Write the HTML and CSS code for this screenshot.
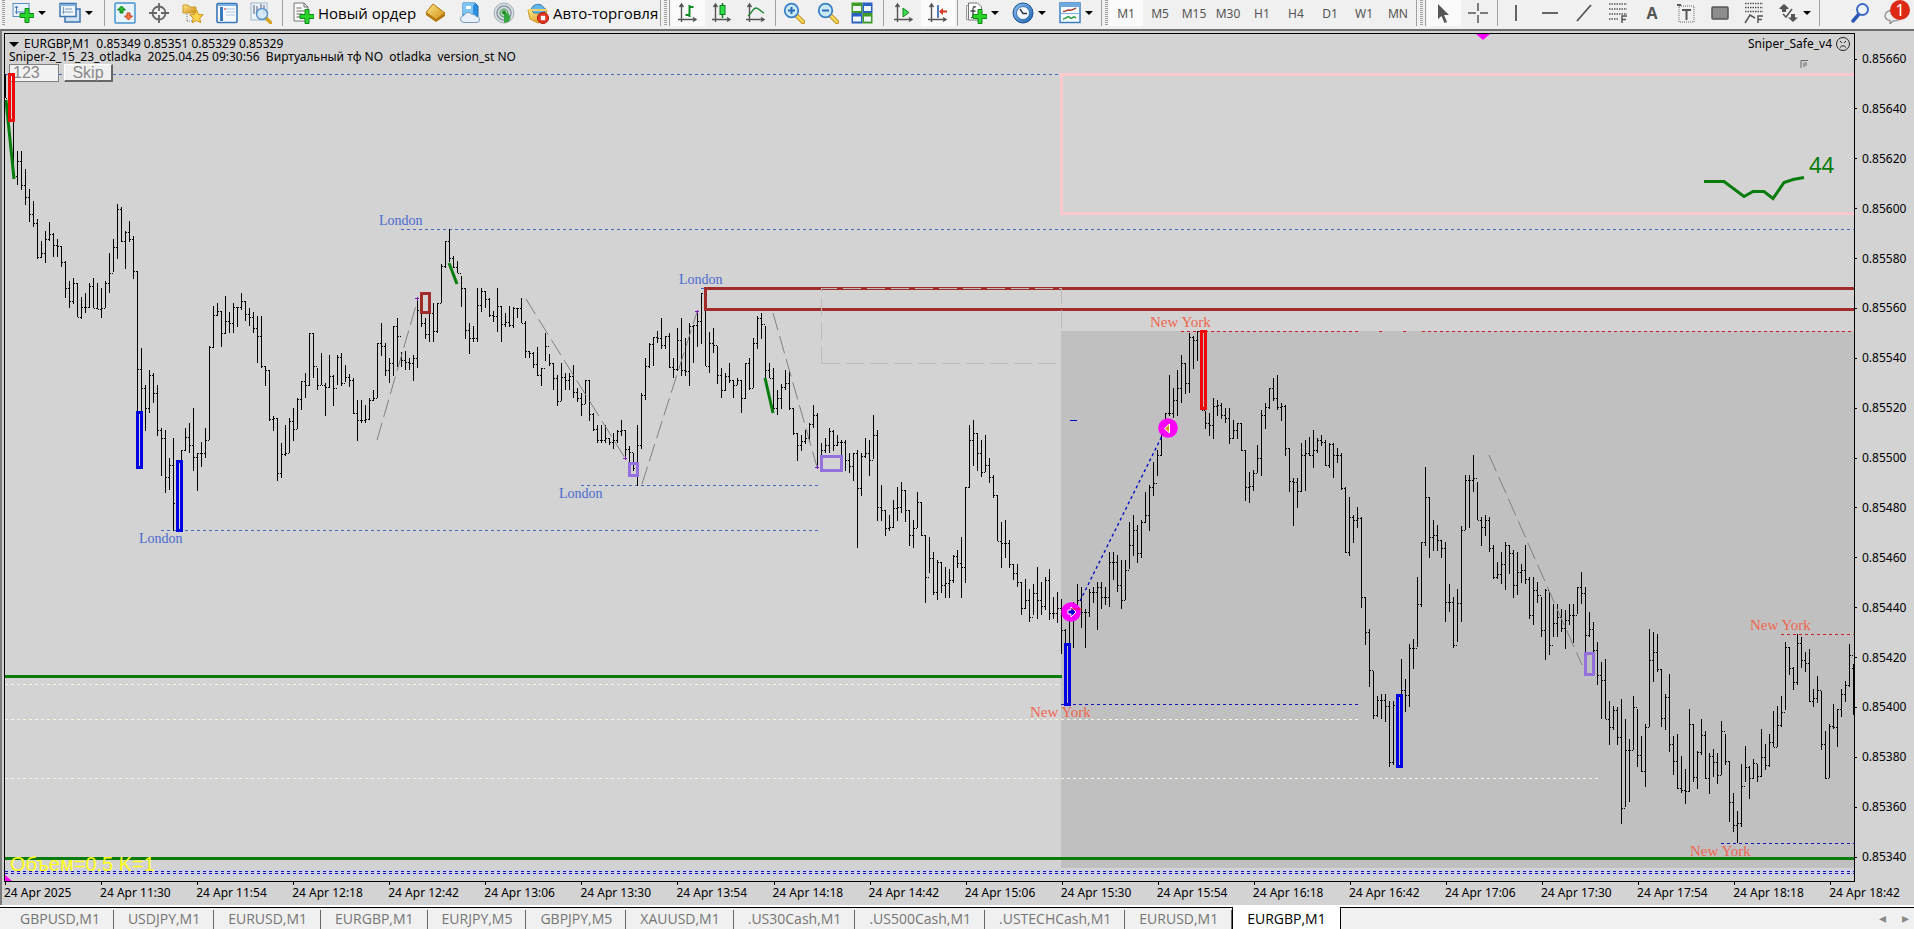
FILE: index.html
```html
<!DOCTYPE html>
<html lang="ru">
<head>
<meta charset="utf-8">
<title>EURGBP,M1</title>
<link rel="stylesheet" href="styles.css">
</head>
<body>
<svg class="defs" aria-hidden="true">
  <defs>
    <linearGradient id="g-blue" x1="0" y1="0" x2="1" y2="1"><stop offset="0" stop-color="#8fc4f3"/><stop offset="1" stop-color="#1d5fae"/></linearGradient>
    <linearGradient id="g-gold" x1="0" y1="0" x2="1" y2="1"><stop offset="0" stop-color="#ffe88a"/><stop offset="1" stop-color="#cf8c10"/></linearGradient>
    <path id="plus" d="M5 0h4v5h5v4H9v5H5V9H0V5h5z" fill="#2bd42b" stroke="#0a8a12"/>
    <g id="axes" fill="none" stroke="#555" stroke-width="1.4"><path d="M4.500 2v18M1 17.500h18M2.500 5l2-3 2 3M16 15.500l3 2-3 2"/></g>
    <g id="lens"><path d="M13 13l7 7" stroke="#b98512" stroke-width="4.500" stroke-linecap="round"/><path d="M14 14l6 6" stroke="#ffd95a" stroke-width="2.500" stroke-linecap="round"/><circle cx="8.500" cy="8.500" r="6.800" fill="#c9e9fb" stroke="#3b7fc4" stroke-width="1.800"/></g>
  </defs>
</svg>

<header class="toolbar">
  <i class="grip"></i>
  <button class="tool drop" aria-label="Новый график"><svg class="icon" viewBox="0 0 22 22"><rect x="1" y="1.500" width="16" height="13" fill="#eaf3fc" stroke="#5b8fc7"/><path d="M4.500 4v8M3 6l1.500-2L6 6M3 10h11" fill="none" stroke="#4a7db5"/><use href="#plus" x="8" y="6.500"/></svg></button>
  <button class="tool drop" aria-label="Профили"><svg class="icon" viewBox="0 0 22 22"><rect x="6" y="7" width="15" height="13" fill="#cfe2f5" stroke="#3f73ae" stroke-width="1.500"/><rect x="1" y="1.500" width="16" height="13" fill="#eef6fd" stroke="#3f73ae" stroke-width="1.500"/><path d="M1 3h16" stroke="#7fb0e2" stroke-width="2"/><path d="M4.500 5v7M3 10h11M6 7h7" fill="none" stroke="#7b98b8"/></svg></button>
  <i class="sep"></i>
  <button class="tool" aria-label="Обзор рынка"><svg class="icon" viewBox="0 0 22 22"><rect x="1" y="1" width="20" height="20" rx="1" fill="#e6f3fd" stroke="#4a94d0" stroke-width="1.500"/><path d="M7.500 4l4 4H9v3H6V8H3.500z" fill="#2cb52c" stroke="#0f7f18"/><path d="M14.500 18l4-4H16v-3h-3v3h-2.500z" fill="#f47a45" stroke="#c8401c"/></svg></button>
  <button class="tool" aria-label="Окно данных"><svg class="icon" viewBox="0 0 22 22"><circle cx="11" cy="11" r="6.500" fill="none" stroke="#666" stroke-width="1.800"/><path d="M11 1v8M11 13v8M1 11h8M13 11h8" stroke="#666" stroke-width="1.800"/></svg></button>
  <button class="tool" aria-label="Навигатор"><svg class="icon" viewBox="0 0 22 22"><path d="M1 3h5l1.500 2H14v6H1z" fill="url(#g-gold)" stroke="#c8992c"/><path d="M5 12v8M5 19h5" stroke="#777" stroke-dasharray="1 1"/><path d="M14.500 8l2 4.300 4.700.6-3.500 3.200 1 4.600-4.200-2.300-4.200 2.300 1-4.600-3.500-3.200 4.700-.6z" fill="#ffd34d" stroke="#c8921a"/></svg></button>
  <button class="tool" aria-label="Терминал"><svg class="icon" viewBox="0 0 22 22"><rect x="1" y="1.500" width="20" height="19" rx="1" fill="#f6faff" stroke="#3877b8" stroke-width="1.600"/><path d="M2 3h18" stroke="#7bb2e6" stroke-width="2"/><path d="M5.500 5v14" stroke="#3877b8" stroke-width="3"/><path d="M10 7h9M10 10h9M10 13h9" stroke="#a9c5e2"/><path d="M8 7h2" stroke="#c22"/></svg></button>
  <button class="tool" aria-label="Тестер стратегий"><svg class="icon" viewBox="0 0 22 22"><rect x="1" y="1" width="16" height="17" fill="#eef4fa" stroke="#9ab4cc"/><path d="M4 3v9M7 4v7M11 2v6M14 3v9" stroke="#557"/><path d="M16 16l5 5" stroke="#d8a423" stroke-width="3.500" stroke-linecap="round"/><circle cx="12" cy="12" r="5.500" fill="#cfe9fa" fill-opacity=".8" stroke="#5b93cc" stroke-width="1.500"/></svg></button>
  <i class="sep"></i>
  <button class="tool wide"><svg class="icon" viewBox="0 0 22 22"><path d="M2 1h10l4 4v14H2z" fill="#fafafa" stroke="#777"/><path d="M12 1v4h4M4.500 6h5M4.500 9h8M4.500 12h6M4.500 15h4" fill="none" stroke="#666"/><use href="#plus" x="8" y="7.500"/></svg>Новый ордер</button>
  <button class="tool" aria-label="MetaEditor"><svg class="icon" viewBox="0 0 22 22"><path d="M8 2l12 9v3l-9 6-10-7v-3z" fill="#b3780f"/><path d="M8 2l12 9-9 6.500L1 10.500z" fill="url(#g-gold)" stroke="#b3780f"/></svg></button>
  <button class="tool" aria-label="VPS"><svg class="icon" viewBox="0 0 22 22"><path d="M4 1h12l3 3v11H4z" fill="#2a8fe0" stroke="#1c6cb5"/><path d="M4 1h12l-2 3v8H4z" fill="#7cc5f7"/><path d="M7 4h5v3H7z" fill="#fff"/><path d="M5 20.500a3.500 3.500 0 010-7 4.500 4.500 0 018-1 3.500 3.500 0 014 2 3 3 0 011 6z" fill="#e8f1fa" stroke="#7b9cc0"/></svg></button>
  <button class="tool" aria-label="Сигналы"><svg class="icon" viewBox="0 0 22 22"><circle cx="11" cy="11" r="10" fill="#d5dde2" stroke="#a3adb5"/><circle cx="11" cy="11" r="7" fill="none" stroke="#8a97a1" stroke-width="1.500"/><circle cx="11" cy="11" r="3.800" fill="#b8e2b8" stroke="#6aa57a" stroke-width="1.500"/><path d="M11 11a5 5 0 014 9l-4 1z" fill="#35a83d"/><circle cx="11" cy="10.500" r="2" fill="#24842c"/></svg></button>
  <button class="tool wide auto"><svg class="icon" viewBox="0 0 22 22"><path d="M1 8h19l-2 9-7 4-8-4z" fill="url(#g-gold)" stroke="#c89422"/><path d="M4 8a7 7 0 0113-2l3 2-5 3H7z" fill="#63b7e6" stroke="#3283b8"/><path d="M1 8h19" stroke="#f2cf67" stroke-width="2"/><circle cx="16" cy="16" r="5.500" fill="#e03522" stroke="#b01c0d"/><rect x="13.800" y="13.800" width="4.400" height="4.400" fill="#fff"/></svg>Авто-торговля</button>
  <i class="line"></i><i class="grip"></i><i class="line"></i>
  <button class="tool on" aria-label="Бары"><svg class="icon" viewBox="0 0 22 22"><use href="#axes"/><path d="M12.500 3v12M12.500 5h4M8.500 13h4" stroke="#118a22" stroke-width="2"/></svg></button>
  <button class="tool" aria-label="Свечи"><svg class="icon" viewBox="0 0 22 22"><use href="#axes"/><path d="M11.500 1v15" stroke="#087a18" stroke-width="1.500"/><rect x="9" y="3.500" width="5" height="9" fill="#2ee04a" stroke="#087a18"/></svg></button>
  <button class="tool" aria-label="Линия"><svg class="icon" viewBox="0 0 22 22"><use href="#axes"/><path d="M3 14C6 12 8 6 11 6s5 4 8 5" fill="none" stroke="#1f8a35" stroke-width="1.500"/></svg></button>
  <i class="sep slim"></i>
  <button class="tool" aria-label="Приблизить"><svg class="icon" viewBox="0 0 22 22"><use href="#lens"/><path d="M5 8.500h7M8.500 5v7" stroke="#2b6cb0" stroke-width="2"/></svg></button>
  <button class="tool" aria-label="Отдалить"><svg class="icon" viewBox="0 0 22 22"><use href="#lens"/><path d="M5 8.500h7" stroke="#2b6cb0" stroke-width="2"/></svg></button>
  <button class="tool" aria-label="Окна мозаикой"><svg class="icon" viewBox="0 0 22 22"><rect width="11" height="10.500" x=".5" y=".5" fill="#3f9a28"/><rect x="11.500" y=".5" width="10" height="10.500" fill="#2a62c4"/><rect x=".5" y="11" width="11" height="10.500" fill="#2a62c4"/><rect x="11.500" y="11" width="10" height="10.500" fill="#3f9a28"/><path d="M2 4h8v5H2zM13 4h7v5h-7zM2 14.500h8v5H2zM13 14.500h7v5h-7z" fill="#eef5fb"/></svg></button>
  <i class="sep"></i>
  <button class="tool" aria-label="Автопрокрутка"><svg class="icon" viewBox="0 0 22 22"><use href="#axes"/><path d="M10 6l6 4.500-6 4.500z" fill="#3ddb4e" stroke="#118a22"/></svg></button>
  <button class="tool on" aria-label="Сдвиг графика"><svg class="icon" viewBox="0 0 22 22"><use href="#axes"/><path d="M11 3v13" stroke="#2a5fae" stroke-width="1.600"/><path d="M12 9.500l4-3.500v2.500h4v2h-4V13z" fill="#d8381e"/></svg></button>
  <i class="sep slim"></i>
  <button class="tool drop" aria-label="Индикаторы"><svg class="icon" viewBox="0 0 22 22"><path d="M1.500 3.500h12v14h-12z" fill="#eee" stroke="#999"/><path d="M3.500 1h9l4 4v13h-13z" fill="#fcfcfc" stroke="#777"/><path d="M11 5c-3-1-3 1-3 3v6c0 1-1 2-2 1.500M5.500 9h5" fill="none" stroke="#444" stroke-width="1.300"/><use href="#plus" x="8" y="7.500"/></svg></button>
  <button class="tool drop" aria-label="Периоды"><svg class="icon" viewBox="0 0 22 22"><circle cx="11" cy="11" r="10" fill="url(#g-blue)" stroke="#164f95"/><circle cx="11" cy="11" r="6.500" fill="#f4f9fe" stroke="#3974b5"/><path d="M8 7l3 4.500h4" fill="none" stroke="#334" stroke-width="1.400"/></svg></button>
  <button class="tool drop" aria-label="Шаблоны"><svg class="icon" viewBox="0 0 22 22"><rect x="1" y="1" width="20" height="19.500" fill="#f5faff" stroke="#3c7fc0" stroke-width="1.500"/><path d="M1 3h20" stroke="#6ea9df" stroke-width="4"/><path d="M2 11.500h18" stroke="#7fb0dd"/><path d="M4 9.500c3 0 4-2 6-1.500s4 0 7-2" fill="none" stroke="#a83a1e" stroke-width="1.500"/><path d="M4 17c3 0 4-3 6-2s2 2 3 1 2-2 4 0" fill="none" stroke="#2b9a3a" stroke-width="1.500"/></svg></button>
  <i class="line"></i><i class="grip"></i>
  <button class="tool tf on">M1</button>
  <button class="tool tf">M5</button>
  <button class="tool tf">M15</button>
  <button class="tool tf">M30</button>
  <button class="tool tf">H1</button>
  <button class="tool tf">H4</button>
  <button class="tool tf">D1</button>
  <button class="tool tf">W1</button>
  <button class="tool tf">MN</button>
  <i class="line"></i><i class="grip"></i><i class="line"></i>
  <button class="tool on" aria-label="Курсор"><svg class="icon" viewBox="0 0 22 22"><path d="M5 2v15l3.500-3 3 7 2.500-1-3-7h5z" fill="#555"/></svg></button>
  <button class="tool" aria-label="Перекрестие"><svg class="icon" viewBox="0 0 22 22"><path d="M11 1v8M11 13v8M1 11h8M13 11h8" stroke="#555" stroke-width="1.500"/></svg></button>
  <i class="sep slim"></i>
  <button class="tool" aria-label="Вертикальная линия"><svg class="icon" viewBox="0 0 22 22"><path d="M11 3v16" stroke="#555" stroke-width="1.800"/></svg></button>
  <button class="tool" aria-label="Горизонтальная линия"><svg class="icon" viewBox="0 0 22 22"><path d="M3 11h16" stroke="#555" stroke-width="1.800"/></svg></button>
  <button class="tool" aria-label="Трендовая линия"><svg class="icon" viewBox="0 0 22 22"><path d="M4 19L18 3" stroke="#555" stroke-width="1.800"/></svg></button>
  <button class="tool" aria-label="Фибоначчи"><svg class="icon" viewBox="0 0 22 22"><path d="M2 2h18M2 7h18M2 12h18M2 17h10" stroke="#555" stroke-width="1.500" stroke-dasharray="1.500 1"/><path d="M15 21v-7h5M15 17.500h4" fill="none" stroke="#555" stroke-width="1.500"/></svg></button>
  <button class="tool letter" aria-label="Текст">A</button>
  <button class="tool" aria-label="Метка"><svg class="icon" viewBox="0 0 22 22"><rect x="4" y="4" width="15" height="16" fill="none" stroke="#666" stroke-dasharray="1 1"/><path d="M7 8h9M11.500 8v10M2 3h4" stroke="#555" stroke-width="2"/></svg></button>
  <button class="tool" aria-label="Прямоугольник"><svg class="icon" viewBox="0 0 22 22"><rect x="3" y="5" width="16" height="12" rx="1" fill="#8c8c8c" stroke="#555" stroke-width="1.500"/></svg></button>
  <button class="tool" aria-label="Веер Фибоначчи"><svg class="icon" viewBox="0 0 22 22"><path d="M2 1.500h18M2 5.500h18M2 9.500h18" stroke="#555" stroke-width="1.500" stroke-dasharray="1.500 1"/><path d="M2 21l5-8 5 3M15 21v-7h5M15 17.500h4" fill="none" stroke="#555" stroke-width="1.500"/></svg></button>
  <button class="tool drop" aria-label="Стрелки"><svg class="icon" viewBox="0 0 22 22"><path d="M7 2l5 4.500-3 1V10H5V7.500l-3-1zM16 20l-5-4.500h3V12h4v3.500h3z" fill="#555"/><path d="M6 12l3 3 6-8" fill="none" stroke="#555" stroke-width="1.500"/></svg></button>
  <i class="line"></i>
  <div class="tray">
    <button class="tool" aria-label="Поиск"><svg class="icon" viewBox="0 0 22 22"><path d="M9 12l-6 7" stroke="#2a55b4" stroke-width="3.500" stroke-linecap="round"/><circle cx="12.500" cy="7.500" r="5.500" fill="#eef4fc" stroke="#3c68c4" stroke-width="2"/></svg></button>
    <button class="tool chat" aria-label="Сообщения"><svg class="icon" viewBox="0 0 22 22"><path d="M9 8c5 0 8 2 8 5.500S14 19 9 19l-3 3v-3.500C3 18 1 16 1 13.500S4 8 9 8z" fill="#eee" stroke="#999" stroke-width="1.500"/></svg><span class="badge">1</span></button>
  </div>
</header>

<main class="chart">
  <section class="plot">
    <svg class="canvas" viewBox="5 34 1849 847" preserveAspectRatio="none">
      <rect x="1061" y="331" width="800" height="537" fill="#c0c0c0"/>
      <rect x="5" y="869" width="1850" height="7" fill="#cdd0e4"/>
      <g class="dots">
        <path class="royal" d="M5 74.500H1061M401 229.500H1854M161 530.500H818M581 485.500H818M701 288.500h5"/>
        <path class="cream" d="M5 684.500H1060M5 719.500H1358M5 778.500H1598"/>
        <path class="navy" d="M1061 704.500H1358M1721 843.500H1854M5 871.500H1854M5 873.500H1854"/>
        <path class="crimson" d="M1181 331.500H1358M1379 331.500h3M1403 331.500h3M1422 331.500H1854M1781 634.500H1854"/>
      </g>
      <path id="bars" class="bars"/>
      <g class="trend"><path d="M377 440L417 302M526 299L625 458M642 484L697 312M773 313L817 467M1489 455L1582 665"/></g>
      <path class="marks" d="M415 298.500h4M417.500 297v4M623 458.500h4M625.500 456v4M695 311.500h4M697.500 310v4M815 467.500h4M817.500 465v4"/>
      <g class="thick">
        <rect class="pink" x="1061.500" y="74.500" width="800" height="139"/>
        <path class="green" d="M5 676.500H1062M5 858.500H1854"/>
        <rect class="brown" x="705.500" y="288.500" width="1160" height="21"/>
        <rect class="brown" x="421.500" y="293.500" width="8" height="19"/>
        <rect class="red" x="1201.500" y="331.500" width="4" height="77"/>
        <rect class="blue" x="137.500" y="412.500" width="4" height="55"/>
        <rect class="blue" x="177.500" y="461.500" width="4" height="69"/>
        <rect class="blue" x="1065.500" y="644.500" width="4" height="60"/>
        <rect class="blue" x="1397.500" y="695.500" width="4" height="71"/>
        <rect class="violet" x="629.500" y="463.500" width="8" height="12"/>
        <rect class="violet" x="821.500" y="456.500" width="20" height="14"/>
        <rect class="violet" x="1585.500" y="653.500" width="8" height="21"/>
      </g>
      <path class="silver" d="M821.500 363.500V288.500H1061.500V331M821.500 363.500H1061"/>
      <g class="green soft"><path d="M6 100L14 179M449 263L457 284M765 378L773 413"/><path d="M1704 181.500h20l20 15 9-5h11l9 7 11-16 9-3 11-2"/></g>
      <circle cx="1071" cy="612" r="9.800" fill="#f0f"/><circle cx="1168" cy="428" r="9.800" fill="#f0f"/>
      <path d="M1080 601L1163 434" stroke="#0000c8" stroke-width="1.300" stroke-dasharray="3 3"/>
      <path d="M1070 420.500h7" stroke="#0000c8"/>
      <path d="M1068 610h3v-3l5 5-5 5v-3h-3z" fill="#00c" stroke="#fff"/><path d="M1071 609h5M1077 609h5" stroke="#e01010"/>
      <path d="M1169.500 424v9l-5-4.500z" fill="#d09a20" stroke="#fff"/>
      <path d="M1476 34h14l-7 6zM5 875l7 6H5z" fill="#f0f"/>
      <path d="M1801 68v-7.500h7M1804 67v-4.500M1806 66v-4" stroke="#666" fill="none"/>
    </svg>
    <div class="info">
      <div class="info-row"><span><i class="caret"></i>EURGBP,M1&nbsp; 0.85349 0.85351 0.85329 0.85329</span><span class="expert">Sniper_Safe_v4 <svg class="face" viewBox="0 0 14 14"><circle cx="7" cy="7" r="6.500" fill="none" stroke="#222"/><path d="M4 4l2 2M10 4L8 6M4 10.500q3-3.500 6 0" fill="none" stroke="#222"/></svg></span></div>
      <div>Sniper-2_15_23_otladka&nbsp; 2025.04.25 09:30:56&nbsp; Виртуальный тф NO&nbsp; otladka&nbsp; version_st NO</div>
      <div class="controls"><input class="count" type="text" value="123" aria-label="Количество"><button class="skip">Skip</button></div>
    </div>
    <svg class="canvas front" viewBox="5 34 1849 847" preserveAspectRatio="none"><g class="thick"><rect class="red" x="9.500" y="74.500" width="4" height="46"/></g></svg>
    <span class="label london" style="--x:379;--y:213">London</span>
    <span class="label london" style="--x:139;--y:531">London</span>
    <span class="label london" style="--x:559;--y:486">London</span>
    <span class="label london" style="--x:679;--y:272">London</span>
    <span class="label newyork" style="--x:1150;--y:314">New York</span>
    <span class="label newyork" style="--x:1030;--y:704">New York</span>
    <span class="label newyork" style="--x:1750;--y:617">New York</span>
    <span class="label newyork" style="--x:1690;--y:843">New York</span>
    <span class="label spread" style="--x:1809;--y:151">44</span>
    <span class="label volume" style="--x:10;--y:853">Объем=0.5 K=1</span>
  </section>
  <ol class="prices">
    <li>0.85660</li><li>0.85640</li><li>0.85620</li><li>0.85600</li><li>0.85580</li><li>0.85560</li><li>0.85540</li><li>0.85520</li><li>0.85500</li><li>0.85480</li><li>0.85460</li><li>0.85440</li><li>0.85420</li><li>0.85400</li><li>0.85380</li><li>0.85360</li><li>0.85340</li>
  </ol>
  <ol class="times">
    <li>24 Apr 2025</li><li>24 Apr 11:30</li><li>24 Apr 11:54</li><li>24 Apr 12:18</li><li>24 Apr 12:42</li><li>24 Apr 13:06</li><li>24 Apr 13:30</li><li>24 Apr 13:54</li><li>24 Apr 14:18</li><li>24 Apr 14:42</li><li>24 Apr 15:06</li><li>24 Apr 15:30</li><li>24 Apr 15:54</li><li>24 Apr 16:18</li><li>24 Apr 16:42</li><li>24 Apr 17:06</li><li>24 Apr 17:30</li><li>24 Apr 17:54</li><li>24 Apr 18:18</li><li>24 Apr 18:42</li>
  </ol>
</main>

<nav class="tabs">
  <button class="tab">GBPUSD,M1</button>
  <button class="tab">USDJPY,M1</button>
  <button class="tab">EURUSD,M1</button>
  <button class="tab">EURGBP,M1</button>
  <button class="tab">EURJPY,M5</button>
  <button class="tab">GBPJPY,M5</button>
  <button class="tab">XAUUSD,M1</button>
  <button class="tab">.US30Cash,M1</button>
  <button class="tab">.US500Cash,M1</button>
  <button class="tab">.USTECHCash,M1</button>
  <button class="tab">EURUSD,M1</button>
  <button class="tab active">EURGBP,M1</button>
  <div class="scroll"><button class="nudge" aria-label="Влево">◂</button><button class="nudge" aria-label="Вправо">▸</button></div>
</nav>
<script src="chart.js"></script>
</body>
</html>
```
FILE: styles.css
```css
* { box-sizing: border-box; }
html, body { height: 100%; }
body {
  margin: 0;
  display: flex;
  flex-direction: column;
  overflow: hidden;
  background: #f0f0f0;
  color: #000;
  font: 12px/13px "Noto Sans", "Open Sans", sans-serif;
}
button, input { font: inherit; color: inherit; margin: 0; padding: 0; border: 0; background: none; }
ol { list-style: none; margin: 0; padding: 0; }
.defs { position: absolute; width: 0; height: 0; }

/* Toolbar */
.toolbar {
  display: flex;
  flex: none;
  height: 29px;
  padding-bottom: 3px;
  background: #f0f0f0;
  white-space: nowrap;
}
.tool {
  flex: none;
  width: 34px;
  display: flex;
  align-items: center;
  justify-content: center;
}
.icon { flex: none; width: 22px; height: 22px; display: block; }
.on { background: #fafafa; }
.drop { width: 47px; justify-content: flex-start; padding-left: 6px; gap: 4px; }
.drop::after { content: ""; border: 4px solid transparent; border-top-color: #000; border-bottom-width: 0; }
.wide { width: 133px; justify-content: flex-start; padding-left: 6px; gap: 4px; font: 15px/20px "Open Sans", "Noto Sans", sans-serif; }
.auto { width: 138px; }
.tf { color: #555; font-size: 12px; }
.letter { color: #555; font: bold 16px/20px "Open Sans", sans-serif; }
.grip {
  flex: none;
  width: 3px;
  margin: 0 1px 0 2px;
  background: repeating-linear-gradient(#a0a0a0 0 1px, #f0f0f0 1px 2px);
}
.line { flex: none; width: 1px; margin: 0 1px; background: #a0a0a0; }
.sep { flex: none; width: 8px; background: linear-gradient(#a0a0a0, #a0a0a0) center / 1px 100% no-repeat; }
.slim { width: 4px; }
.tray { display: flex; margin-left: auto; padding-right: 2px; }
.chat { position: relative; }
.badge {
  position: absolute;
  top: 0;
  right: 2px;
  width: 20px;
  height: 20px;
  border-radius: 10px;
  background: #dc2a14;
  color: #fff;
  font: 16px/20px "Noto Sans", sans-serif;
  text-align: center;
}

/* Chart window */
.chart {
  flex: 1;
  min-height: 0;
  display: grid;
  grid-template: minmax(0, 1fr) 23px / minmax(0, 1fr) 59px;
  padding: 2px 0 0 2px;
  border-top: 2px solid #6e6e6e;
  border-left: 2px solid #7c7c7c;
  background: #d3d3d3;
  overflow: hidden;
}
.plot { position: relative; border: 1px solid #000; overflow: hidden; }
.canvas { position: absolute; inset: 0; width: 100%; height: 100%; display: block; }
.front { pointer-events: none; }
.canvas * { vector-effect: non-scaling-stroke; }
.dots path, .bars, .thick, .silver, .marks { shape-rendering: crispEdges; fill: none; }
.dots path { stroke-dasharray: 3 3; }
.royal { stroke: #4766c0; }
.cream { stroke: #f7f4e2; }
.navy { stroke: #1414b4; }
.crimson { stroke: #c8202a; }
.bars { stroke: #000; }
.trend { fill: none; stroke: #808080; stroke-dasharray: 18 6; }
.marks { stroke: #7a1fb0; }
.thick { stroke-width: 3px; stroke-linejoin: round; }
.pink { stroke: #ffc8cc; }
.green { stroke: #087c0c; }
.soft { stroke-width: 3px; fill: none; }
.brown { stroke: #a02c2c; }
.red { stroke: #ee0808; }
.blue { stroke: #0000e0; }
.violet { stroke: #9370db; }
.silver { stroke: #bcbcbc; stroke-dasharray: 18 6; }

.label {
  position: absolute;
  left: calc((var(--x) - 5) / 1849 * 100%);
  top: calc((var(--y) - 34) / 847 * 100%);
  white-space: nowrap;
}
.london { color: #4a6ad0; font: 14px/16px "Liberation Serif", serif; }
.newyork { color: #f0654e; font: 15px/16px "Liberation Serif", serif; }
.spread { color: #087c0c; font: 22px/26px "Noto Sans", sans-serif; }
.volume { color: #ffff20; font: 20px/23px "Liberation Sans", sans-serif; }

.info { position: relative; padding: 3px 4px 0; white-space: nowrap; }
.info-row { display: flex; justify-content: space-between; height: 13px; }
.caret { display: inline-block; margin-right: 5px; border: 5px solid transparent; border-top-color: #000; border-bottom-width: 0; vertical-align: middle; }
.expert { display: flex; gap: 4px; }
.face { width: 14px; height: 14px; }
.controls { display: flex; gap: 5px; margin-top: 1px; color: #888; font: 16px/16px "Liberation Sans", sans-serif; }
.count { width: 50px; height: 18px; border: 1px solid #808080; background: #f2f2f2; padding-left: 3px; }
.skip { width: 49px; height: 18px; background: #f0f0f0; border: 1px solid #fff; border-right: 2px solid #666; border-bottom: 2px solid #666; line-height: 14px; }

.prices {
  display: flex;
  flex-direction: column;
  justify-content: space-between;
  padding: 18px 0 17px;
  line-height: 16px;
}
.prices li { display: flex; align-items: center; gap: 5px; }
.prices li::before { content: ""; width: 2px; height: 1px; background: #000; }
.times { display: flex; line-height: 16px; }
.times li { flex: 0 0 5.19%; position: relative; padding-top: 3px; white-space: nowrap; }
.times li::before { content: ""; position: absolute; left: 1px; top: 0; width: 1px; height: 3px; background: #000; }

/* Tabs */
.tabs {
  display: flex;
  flex: none;
  height: 24px;
  padding-left: 6px;
  border-top: 2px solid #fff;
  background: linear-gradient(#000 0 1px, #f0f0f0 1px);
  color: #757575;
  font: 14px/20px "Open Sans", "Noto Sans", sans-serif;
}
.tab { position: relative; padding: 2px 14px 0; white-space: nowrap; }
.tab::after { content: ""; position: absolute; right: 0; top: 3px; bottom: 0; width: 1px; background: #666; }
.active { background: #fff; color: #000; border-left: 1px solid #000; border-right: 1px solid #000; }
.active::after { display: none; }
.scroll { display: flex; gap: 13px; margin-left: auto; padding-right: 4px; color: #888; }
.nudge { width: 10px; }
```
FILE: chart.js
```js
// One-minute bars, 4 units apart: top, bottom and close of each, in plot units.
const bars = `
74 98 98|80 115 112|122 175 176|151 185 161|151 190 185|169 205 197|189 222 214|201 227 223|219 259 257|241 258 253
231 263 239|222 241 234|233 257 245|239 257 246|246 267 262|261 298 288|281 308 301|278 304 283|283 317 317|297 319 307
293 313 307|283 308 286|278 308 308|283 309 309|288 318 308|281 308 283|253 293 273|239 272 247|204 259 209|207 242 241
231 269 232|221 242 239|236 279 271|271 411 369|348 412 388|385 431 408|370 413 375|373 403 393|385 436 430|428 476 438
430 493 477|458 490 465|438 531 503|461 530 462|450 462 450|428 451 437|423 453 445|408 471 457|453 491 453|442 467 453
428 458 440|346 440 347|306 348 315|303 316 311|311 347 333|296 334 321|312 333 323|303 333 307|307 327 307|293 310 301
301 321 314|308 326 317|312 333 328|316 363 336|316 368 366|366 386 370|370 421 419|416 431 418|418 481 473|443 478 454
425 456 453|418 453 421|408 441 429|398 429 399|381 410 381|373 398 385|333 386 333|333 378 366|368 390 385|353 385 385
383 416 387|355 388 376|375 406 388|355 385 357|353 386 383|365 382 377|374 387 380|378 414 413|400 441 420|400 423 420
405 423 419|398 420 400|390 401 398|343 398 343|323 356 346|343 376 370|358 383 363|326 376 326|318 367 336|352 367 360
351 370 362|358 370 363|355 381 358|299 368 310|310 327 323|318 339 334|313 342 313|303 342 331|303 333 303|264 303 266
241 268 241|229 262 258|256 268 267|261 273 273|276 307 288|288 339 330|323 354 338|326 342 338|288 342 305|288 312 291
291 308 299|298 317 315|311 322 316|288 332 306|306 342 324|313 327 322|306 327 325|307 328 308|308 318 308|298 323 323
321 358 351|351 358 353|352 368 364|347 376 375|368 386 368|333 361 346|354 366 363|363 390 378|375 406 401|363 401 377
373 390 380|373 390 376|365 398 392|388 402 398|393 416 404|380 404 380|380 421 414|413 431 429|425 443 440|425 443 440
425 443 438|438 445 442|433 449 440|430 443 431|420 436 430|430 458 449|446 462 452|453 471 468|425 486 445|393 449 395
358 400 366|343 368 344|337 366 337|331 343 338|318 349 345|336 349 336|333 368 367|358 378 369|328 371 340|318 376 370
338 376 371|323 386 326|325 363 325|311 347 321|293 344 293|289 366 366|332 373 343|328 353 345|346 384 375|368 398 390
373 391 376|363 383 380|380 398 385|378 385 380|380 413 398|363 399 363|358 390 388|338 388 343|316 349 318|313 339 324
326 378 370|363 378 378|368 410 408|390 415 398|384 409 387|370 390 383|371 410 408|408 435 433|433 461 445|435 451 441
430 444 438|423 442 424|405 428 415|413 467 467|443 455 450|438 453 445|428 453 431|430 451 445|435 446 442|440 455 442
440 471 460|453 473 466|453 481 453|450 548 488|453 496 456|438 458 453|440 476 460|415 459 435|430 521 507|485 521 510
510 536 528|515 531 527|500 528 508|487 521 507|482 513 490|490 522 510|510 546 535|520 548 528|492 528 502|502 536 535
535 603 577|537 573 558|552 595 592|560 600 562|562 593 585|567 598 583|569 598 580|555 583 556|550 568 563|537 598 567
487 583 487|425 488 440|420 466 433|433 471 453|440 477 472|435 472 465|458 483 477|475 498 495|495 541 541|522 568 543
520 558 543|540 568 564|564 580 573|564 587 582|582 615 608|579 609 600|589 622 617|584 615 593|567 619 600|582 615 606
577 610 580|569 620 613|597 619 613|592 623 608|599 654 630|629 645 645|616 645 620|602 648 605|584 617 600|587 628 612
609 648 612|589 617 592|587 603 592|582 630 587|582 609 597|587 605 597|552 607 562|552 580 562|555 592 585|560 609 600
560 600 570|522 569 545|515 556 530|525 563 553|520 558 522|492 523 515|485 531 487|462 496 483|450 476 455|423 456 425
413 428 413|375 416 413|388 418 400|370 416 388|355 403 363|363 394 383|333 393 337|336 369 340|331 361 331|331 410 410
411 429 423|413 436 425|398 439 406|400 416 405|403 419 415|408 423 418|408 444 438|420 439 430|423 439 423|423 451 450
450 501 487|472 503 486|470 491 473|445 473 458|410 476 415|403 429 407|388 409 388|378 401 398|375 410 407|403 421 406
405 456 448|448 492 481|478 526 482|478 508 491|443 492 455|440 491 453|437 456 455|430 468 450|438 453 440|435 446 442
440 466 465|443 468 444|443 478 455|448 463 455|453 490 488|487 553 552|497 556 517|515 543 520|507 528 518|517 608 597
597 645 632|629 687 670|671 719 715|696 717 700|694 719 700|694 722 706|701 767 762|701 765 705|700 750 700|659 697 690
679 712 695|644 707 648|639 669 648|577 647 604|542 607 542|467 546 497|497 558 537|520 551 535|525 551 540|540 558 548
542 622 602|584 612 602|597 648 645|589 642 603|526 622 530|475 530 480|475 528 480|455 492 478|482 520 520|517 546 527
515 536 520|517 552 548|545 579 577|562 579 574|552 584 564|542 590 545|545 574 553|550 598 585|552 595 572|564 583 570
545 584 579|577 619 615|577 625 590|582 603 595|597 637 630|589 660 590|592 655 645|604 637 623|604 637 617|609 632 628
610 649 620|604 625 615|604 643 615|587 614 587|572 604 593|587 652 635|612 637 629|622 652 650|642 685 675|662 719 680
659 719 719|701 745 727|706 730 710|707 745 737|699 824 808|719 807 750|739 802 750|696 750 707|709 767 755|736 772 771
724 787 727|629 727 660|632 682 652|634 672 669|669 727 718|694 730 697|674 752 744|736 775 761|734 789 788|756 793 790
769 804 791|709 792 724|724 782 777|751 789 752|719 755 735|731 779 778|753 794 756|749 777 762|753 784 775|721 775 731
734 765 761|761 822 802|793 832 825|811 843 823|764 827 786|746 782 767|766 799 778|759 779 763|764 782 776|729 777 757
744 770 765|734 767 742|711 747 747|706 747 725|696 727 712|642 710 647|647 675 668|667 690 682|634 685 643|637 668 660
652 672 663|649 702 701|689 707 698|676 703 690|691 750 744|731 779 778|724 778 726|704 729 727|709 747 709|689 717 694
681 702 685|644 687 655|664 715 668|664 715 668
`.trim().split(/[|\n]/).map(bar => bar.split(" ").map(Number));

const step = 4;
let d = "";
let open = bars[0][0];
bars.forEach(([top, bottom, close], i) => {
  const x = Math.min(5 + i * step, 1853) + 0.5;
  d += `M${x} ${top}V${bottom}`;
  d += `M${x - 1.5} ${open + 0.5}h1M${x + 0.5} ${close + 0.5}h1`;
  open = close;
});
document.getElementById("bars").setAttribute("d", d);
```
